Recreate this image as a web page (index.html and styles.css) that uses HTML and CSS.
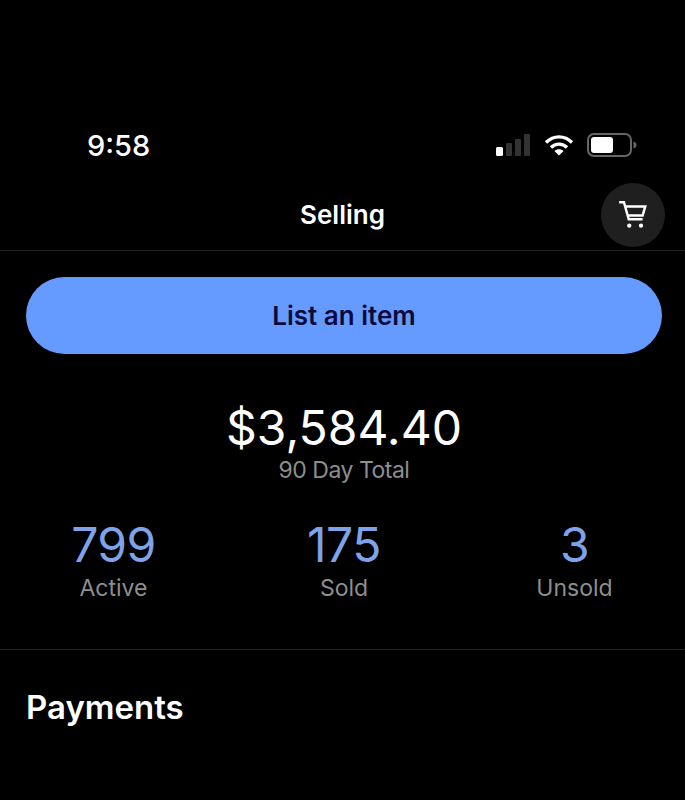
FILE: index.html
```html
<!DOCTYPE html>
<html lang="en">
<head>
    <meta charset="UTF-8">
    <meta name="viewport" content="width=device-width, initial-scale=1.0">
    <title>Selling</title>
    <link rel="stylesheet" href="styles.css">
</head>
<body>
    <div class="status-bar">
        <span class="time">9:58</span>
        <div class="status-icons">
            <svg class="signal" width="36" height="22" viewBox="0 0 36 22">
                <rect x="1" y="13" width="7" height="9" rx="1.5" fill="#fff"/>
                <rect x="11" y="9" width="6" height="13" rx="1" fill="#333"/>
                <rect x="20" y="5" width="6" height="17" rx="1" fill="#333"/>
                <rect x="29" y="0" width="6" height="22" rx="1" fill="#333"/>
            </svg>
            <svg class="wifi" width="30" height="22" viewBox="0 0 30 22" fill="none" stroke="#fff" stroke-width="3.4">
                <path d="M2 8.5C9.5 1 20.5 1 28 8.5"/>
                <path d="M7 13.5C11.5 9 18.5 9 23 13.5"/>
                <path d="M15 21.5l-4.6-4.6C13 14.6 17 14.6 19.6 16.9z" fill="#fff" stroke="none"/>
            </svg>
            <svg class="battery" width="50" height="24" viewBox="0 0 50 24">
                <rect x="1" y="1" width="43" height="22" rx="6" fill="none" stroke="#666" stroke-width="2"/>
                <rect x="4" y="4" width="22" height="16" rx="3" fill="#fff"/>
                <path d="M46.5 8.5c2 .6 3 1.8 3 3.5s-1 2.9-3 3.5z" fill="#666"/>
            </svg>
        </div>
    </div>

    <div class="nav">
        <h1>Selling</h1>
        <div class="cart">
            <svg width="32" height="32" viewBox="0 0 30 30" fill="none" stroke="#fff" stroke-width="2.3">
                <path d="M2 3h4.500l4.500 16h13"/>
                <path d="M7.500 7h19l-2.500 8.500H10"/>
                <circle cx="11.500" cy="25" r="2" fill="#fff" stroke="none"/>
                <circle cx="22.500" cy="25" r="2" fill="#fff" stroke="none"/>
            </svg>
        </div>
    </div>

    <div class="content">
        <button class="list-btn">List an item</button>

        <div class="total">
            <div class="amount">$3,584.40</div>
            <div class="label">90 Day Total</div>
        </div>

        <div class="stats">
            <div class="stat">
                <div class="num">799</div>
                <div class="label">Active</div>
            </div>
            <div class="stat">
                <div class="num">175</div>
                <div class="label">Sold</div>
            </div>
            <div class="stat">
                <div class="num">3</div>
                <div class="label">Unsold</div>
            </div>
        </div>
    </div>

    <h2 class="section-title">Payments</h2>
</body>
</html>
```

FILE: styles.css
```css
body {
    font-family: Inter, "Liberation Sans", sans-serif;
    margin: 0;
    padding: 0;
    background-color: #000;
    color: #fff;
    height: 800px;
    overflow: hidden;
}
.status-bar {
    display: flex;
    justify-content: space-between;
    align-items: center;
    height: 34px;
    padding: 128px 48px 0 87px;
}
.time {
    font-size: 29px;
    font-weight: 500;
}
.status-icons {
    display: flex;
    align-items: center;
    gap: 13px;
}
.nav {
    position: relative;
    display: flex;
    justify-content: center;
    align-items: center;
    box-sizing: border-box;
    height: 89px;
    padding-top: 17px;
    border-bottom: 1px solid #222;
}
.nav h1 {
    margin: 0;
    font-size: 26px;
    font-weight: 600;
}
.cart {
    position: absolute;
    right: 20px;
    top: 21px;
    width: 64px;
    height: 64px;
    border-radius: 50%;
    background: #1f1f1f;
    display: flex;
    align-items: center;
    justify-content: center;
}
.content {
    padding: 26px 23px 0 26px;
    border-bottom: 1px solid #222;
    height: 372px;
}
.list-btn {
    display: block;
    width: 100%;
    height: 77px;
    padding-bottom: 2px;
    border: none;
    border-radius: 39px;
    background: #659bff;
    color: #0a0a3c;
    font-family: inherit;
    font-size: 26px;
    font-weight: 600;
}
.total {
    text-align: center;
    margin-top: 46px;
}
.amount {
    font-size: 48px;
    line-height: 56px;
}
.label {
    font-size: 23px;
    line-height: 28px;
    letter-spacing: -0.5px;
    color: #8e8e8e;
}
.stats {
    display: grid;
    grid-template-columns: 175px 1fr 175px;
    margin-top: 33px;
    text-align: center;
}
.num {
    font-size: 48px;
    line-height: 56px;
    letter-spacing: -0.5px;
    color: #7ea3e8;
}
.stat .label {
    margin-top: 1px;
    letter-spacing: 0;
}
.section-title {
    margin: 37px 0 0 26px;
    font-size: 33px;
    line-height: 40px;
    font-weight: 600;
}
```
